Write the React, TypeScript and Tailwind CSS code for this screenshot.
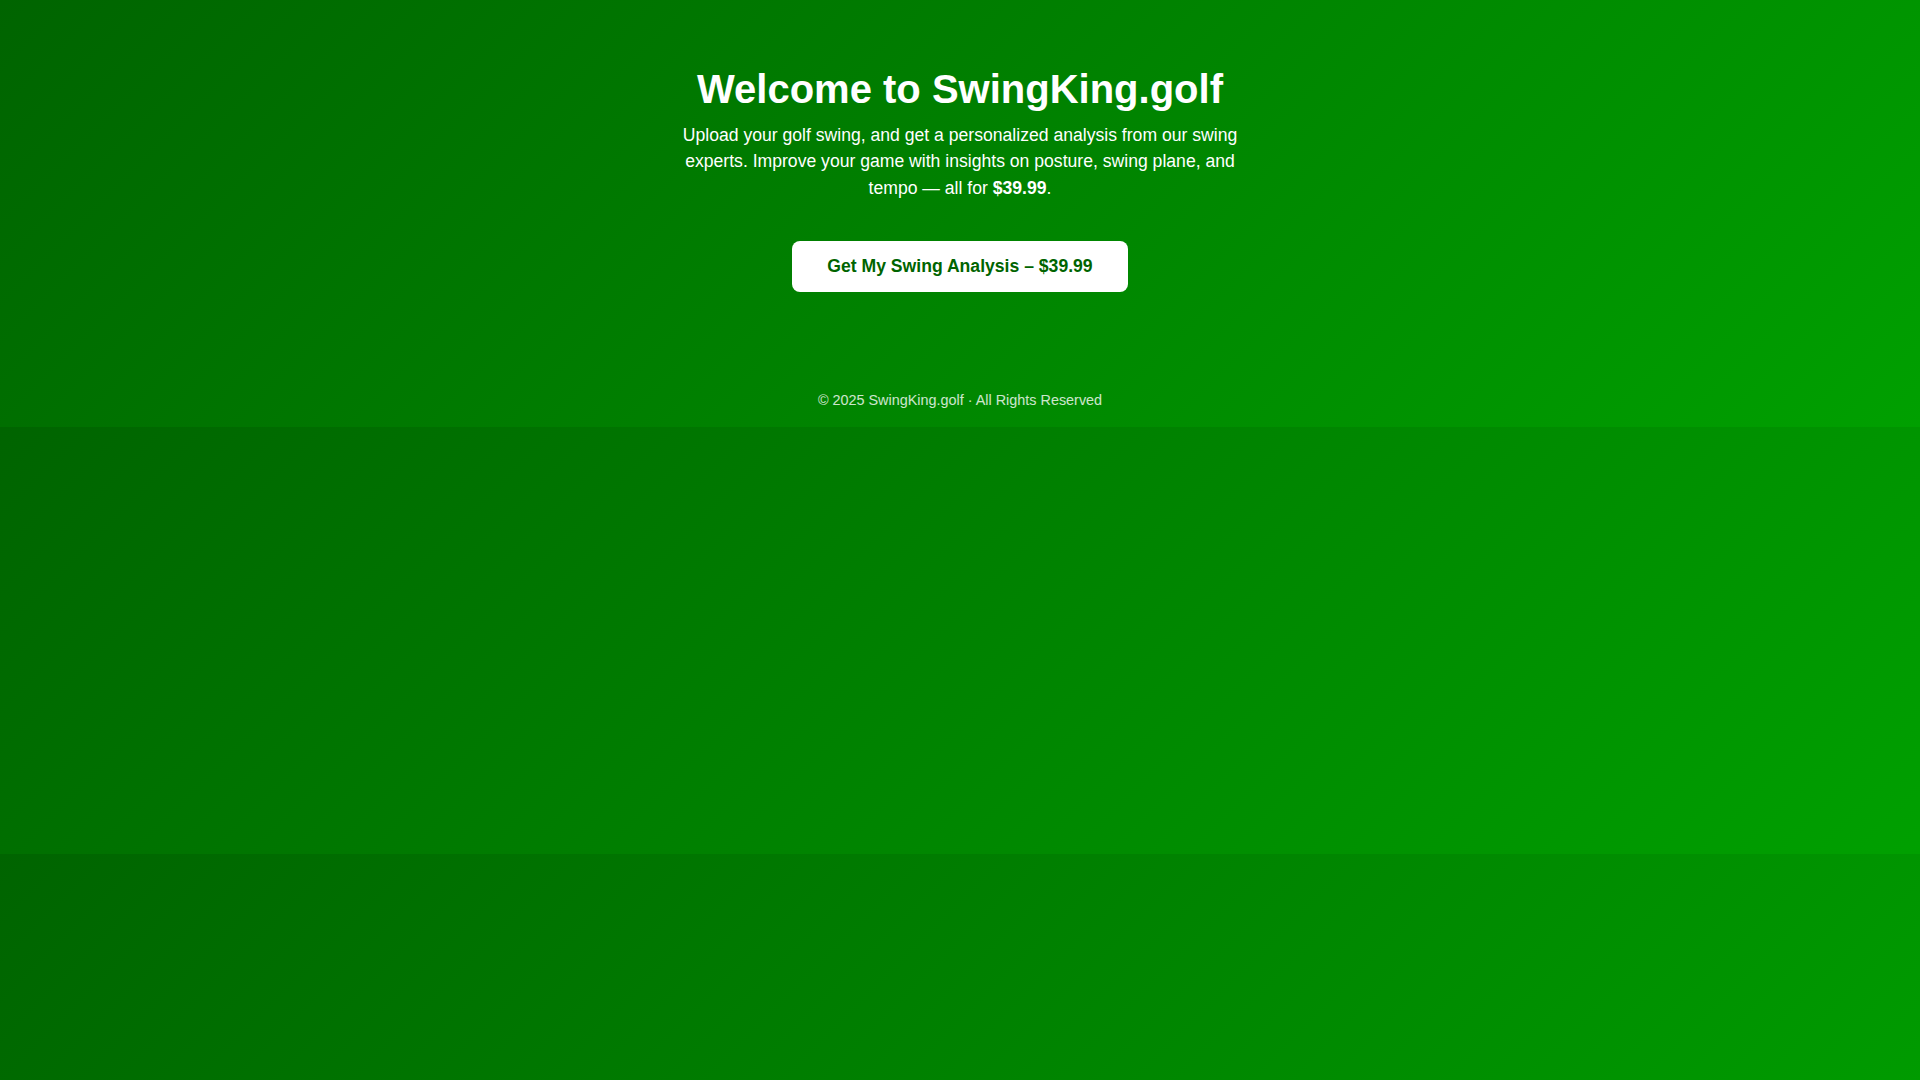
export default function App() {
  return (
    <div
      className="min-h-screen bg-[linear-gradient(135deg,#006400,#00a000)] bg-size-[100%_427px] bg-repeat text-white"
      style={{ fontFamily: '"Liberation Sans", Arial, sans-serif' }}
    >
      <header className="flex flex-col items-center px-5 pt-[66px] text-center">
        <h1 className="text-[40px] font-bold leading-[46px]">Welcome to SwingKing.golf</h1>
        <p className="mx-auto mt-[10px] max-w-[600px] text-[17.6px] leading-[1.5]">
          Upload your golf swing, and get a personalized analysis from our swing experts. Improve your
          game with insights on posture, swing plane, and tempo — all for <strong>$39.99</strong>.
        </p>
        <button className="mt-10 rounded-lg bg-white px-[35px] py-[15px] text-[17.6px] leading-[normal] font-bold text-[#006400]">
          Get My Swing Analysis – $39.99
        </button>
      </header>

      <footer className="pt-[100px] pb-5 text-center text-[14.4px] leading-[normal] text-white/80">
        © 2025 SwingKing.golf · All Rights Reserved
      </footer>
    </div>
  );
}
